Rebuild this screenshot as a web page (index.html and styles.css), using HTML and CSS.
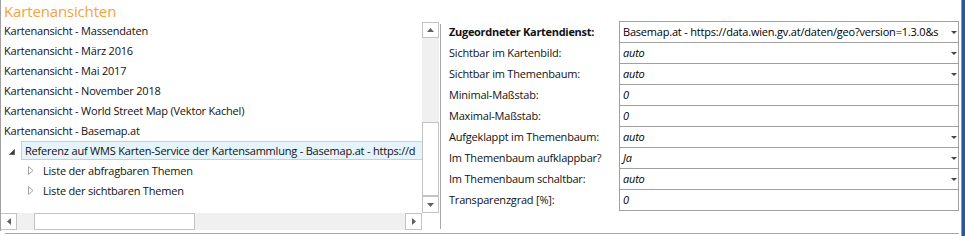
FILE: index.html
```html
<!DOCTYPE html>
<html lang="de">
<head>
<meta charset="utf-8">
<title>Kartenansichten</title>
<link rel="stylesheet" href="styles.css">
</head>
<body>
<div class="page">
  <div class="content">
    <div class="frame">
      <section class="left">
        <h1 class="title">Kartenansichten</h1>
        <div class="tree-area">
          <div class="tree-body">
            <ul class="tree">
              <li class="row">Kartenansicht - Massendaten</li>
              <li class="row">Kartenansicht - März 2016</li>
              <li class="row">Kartenansicht - Mai 2017</li>
              <li class="row">Kartenansicht - November 2018</li>
              <li class="row">Kartenansicht - World Street Map (Vektor Kachel)</li>
              <li class="row">Kartenansicht - Basemap.at</li>
              <li class="row row-sel">
                <svg class="exp" width="6" height="6" viewBox="0 0 6 6"><path d="M5.5 0.5 L5.5 5.5 L0.5 5.5 Z" fill="#3c3c3c" stroke="#3c3c3c" stroke-width="0.6" stroke-linejoin="round"/></svg>
                <span class="sel-box">Referenz auf WMS Karten-Service der Kartensammlung - Basemap.at - https://d</span>
              </li>
              <li class="row row-child">
                <svg class="col" width="6" height="9" viewBox="0 0 6 9"><path d="M0.5 0.5 L5 4.5 L0.5 8.5 Z" fill="none" stroke="#a6a6a6" stroke-width="1" stroke-linejoin="round"/></svg>
                <span>Liste der abfragbaren Themen</span>
              </li>
              <li class="row row-child">
                <svg class="col" width="6" height="9" viewBox="0 0 6 9"><path d="M0.5 0.5 L5 4.5 L0.5 8.5 Z" fill="none" stroke="#a6a6a6" stroke-width="1" stroke-linejoin="round"/></svg>
                <span>Liste der sichtbaren Themen</span>
              </li>
            </ul>
            <div class="vscroll">
              <div class="sb-btn sb-up"><svg width="7" height="4" viewBox="0 0 7 4"><path d="M0 4 L3.5 0 L7 4 Z" fill="#606060"/></svg></div>
              <div class="sb-vtrack"><div class="sb-vthumb"></div></div>
              <div class="sb-btn sb-down"><svg width="7" height="4" viewBox="0 0 7 4"><path d="M0 0 L7 0 L3.5 4 Z" fill="#606060"/></svg></div>
            </div>
          </div>
          <div class="hscroll-row">
            <div class="hscroll">
              <div class="sb-btn sb-left"><svg width="4" height="7" viewBox="0 0 4 7"><path d="M4 0 L4 7 L0 3.5 Z" fill="#606060"/></svg></div>
              <div class="sb-htrack"><div class="sb-hthumb"></div></div>
              <div class="sb-btn sb-right"><svg width="4" height="7" viewBox="0 0 4 7"><path d="M0 0 L4 3.5 L0 7 Z" fill="#606060"/></svg></div>
            </div>
            <div class="corner"></div>
          </div>
        </div>
      </section>
      <div class="divider"></div>
      <section class="props">
        <div class="prow">
          <div class="plabel plabel-bold">Zugeordneter Kartendienst:</div>
          <div class="pval"><span class="ptext">Basemap.at - https://data.wien.gv.at/daten/geo?version=1.3.0&amp;s</span><span class="dd"></span></div>
        </div>
        <div class="prow">
          <div class="plabel">Sichtbar im Kartenbild:</div>
          <div class="pval"><span class="ptext ital">auto</span><span class="dd"></span></div>
        </div>
        <div class="prow">
          <div class="plabel">Sichtbar im Themenbaum:</div>
          <div class="pval"><span class="ptext ital">auto</span><span class="dd"></span></div>
        </div>
        <div class="prow">
          <div class="plabel">Minimal-Maßstab:</div>
          <div class="pval"><span class="ptext ital">0</span></div>
        </div>
        <div class="prow">
          <div class="plabel">Maximal-Maßstab:</div>
          <div class="pval"><span class="ptext ital">0</span></div>
        </div>
        <div class="prow">
          <div class="plabel">Aufgeklappt im Themenbaum:</div>
          <div class="pval"><span class="ptext ital">auto</span><span class="dd"></span></div>
        </div>
        <div class="prow">
          <div class="plabel">Im Themenbaum aufklappbar?</div>
          <div class="pval"><span class="ptext ital">Ja</span><span class="dd"></span></div>
        </div>
        <div class="prow">
          <div class="plabel">Im Themenbaum schaltbar:</div>
          <div class="pval"><span class="ptext ital">auto</span><span class="dd"></span></div>
        </div>
        <div class="prow prow-last">
          <div class="plabel">Transparenzgrad [%]:</div>
          <div class="pval"><span class="ptext ital">0</span></div>
        </div>
      </section>
    </div>
    <div class="baseline"></div>
  </div>
  <div class="edge"></div>
</div>
</body>
</html>
```

FILE: styles.css
```css
* {
  box-sizing: border-box;
}

html, body {
  margin: 0;
  padding: 0;
  background: #ffffff;
}

body {
  font-family: "Open Sans", "Noto Sans", "Liberation Sans", sans-serif;
  font-size: 11px;
  letter-spacing: -0.2px;
  color: #111111;
  width: 965px;
  height: 236px;
  overflow: hidden;
}

.page {
  display: flex;
  width: 965px;
  height: 236px;
}

.content {
  width: 961px;
  display: flex;
  flex-direction: column;
}

.frame {
  display: flex;
  height: 233px;
}

/* ---------- left panel ---------- */
.left {
  width: 440px;
  border-left: 1px solid #a0a0a0;
  height: 231px;
  display: flex;
  flex-direction: column;
}

.title {
  margin: 0;
  height: 21px;
  padding-left: 3px;
  font-size: 15px;
  font-weight: 400;
  letter-spacing: -0.15px;
  line-height: 22px;
  color: #f3a33c;
  white-space: nowrap;
}

.tree-area {
  display: flex;
  flex-direction: column;
}

.tree-body {
  display: flex;
  height: 192px;
}

.tree {
  list-style: none;
  margin: 0;
  padding: 0;
  width: 421px;
  overflow: hidden;
}

.row {
  height: 20px;
  line-height: 20px;
  padding-left: 3px;
  white-space: nowrap;
  display: flex;
  align-items: center;
}

.row-sel {
  padding-left: 8px;
}

.exp {
  flex: none;
  margin-right: 6px;
  margin-top: 1px;
}

.sel-box {
  flex: none;
  width: 402px;
  height: 19px;
  line-height: 17px;
  align-self: flex-start;
  padding-left: 3px;
  background: #e5f3fb;
  border: 1px solid #a8d8f6;
  white-space: nowrap;
}

.row-child {
  padding-left: 27px;
}

.col {
  flex: none;
  margin-right: 9px;
  margin-top: -1px;
}

/* ---------- scrollbars ---------- */
.vscroll {
  width: 17px;
  margin-top: 1px;
  height: 191px;
  display: flex;
  flex-direction: column;
}

.sb-btn {
  background: #ffffff;
  border: 1px solid #c3c3c3;
  display: flex;
  align-items: center;
  justify-content: center;
  flex: none;
}

.sb-up {
  height: 16px;
}

.sb-down {
  height: 17px;
}

.sb-vtrack {
  flex: 1;
  background: #f0f0f0;
  padding-top: 84px;
}

.sb-vthumb {
  height: 74px;
  background: #ffffff;
  border: 1px solid #c3c3c3;
}

.hscroll-row {
  display: flex;
  height: 17px;
}

.hscroll {
  width: 421px;
  display: flex;
}

.sb-left {
  width: 16px;
  border-left: none;
}

.sb-right {
  width: 17px;
}

.sb-htrack {
  flex: 1;
  background: #f0f0f0;
  padding-left: 17px;
  display: flex;
}

.sb-hthumb {
  width: 161px;
  background: #ffffff;
  border: 1px solid #c3c3c3;
}

.corner {
  width: 18px;
  background: #ffffff;
}

.divider {
  width: 1px;
  margin-top: 24px;
  height: 205px;
  background: #a9a9a9;
}

/* ---------- property panel ---------- */
.props {
  width: 520px;
  padding-top: 21px;
  padding-left: 8px;
  display: flex;
  flex-direction: column;
}

.prow {
  display: grid;
  grid-template-columns: 170px 340px;
  height: 21px;
}

.prow-last {
  height: 22px;
}

.plabel {
  line-height: 21px;
  white-space: nowrap;
  color: #111111;
}

.plabel-bold {
  font-weight: 700;
  letter-spacing: -0.3px;
}

.pval {
  border: 1px solid #a0a0a0;
  border-bottom: none;
  display: flex;
  align-items: center;
  padding-left: 3px;
  padding-right: 1px;
}

.prow-last .pval {
  border-bottom: 1px solid #a0a0a0;
}

.ptext {
  flex: 1;
  min-width: 0;
  white-space: nowrap;
  line-height: 20px;
  color: #000000;
}

.ital {
  font-style: italic;
}

.dd {
  flex: none;
  width: 0;
  height: 0;
  margin-left: 8px;
  border-left: 3px solid transparent;
  border-right: 3px solid transparent;
  border-top: 3px solid #444444;
}

.baseline {
  margin-left: 5px;
  width: 954px;
  height: 1px;
  background: #a6a6a6;
}

.edge {
  width: 4px;
  height: 236px;
  background: #2b579a;
  border-left: 1px solid #7a9bd0;
}
```
